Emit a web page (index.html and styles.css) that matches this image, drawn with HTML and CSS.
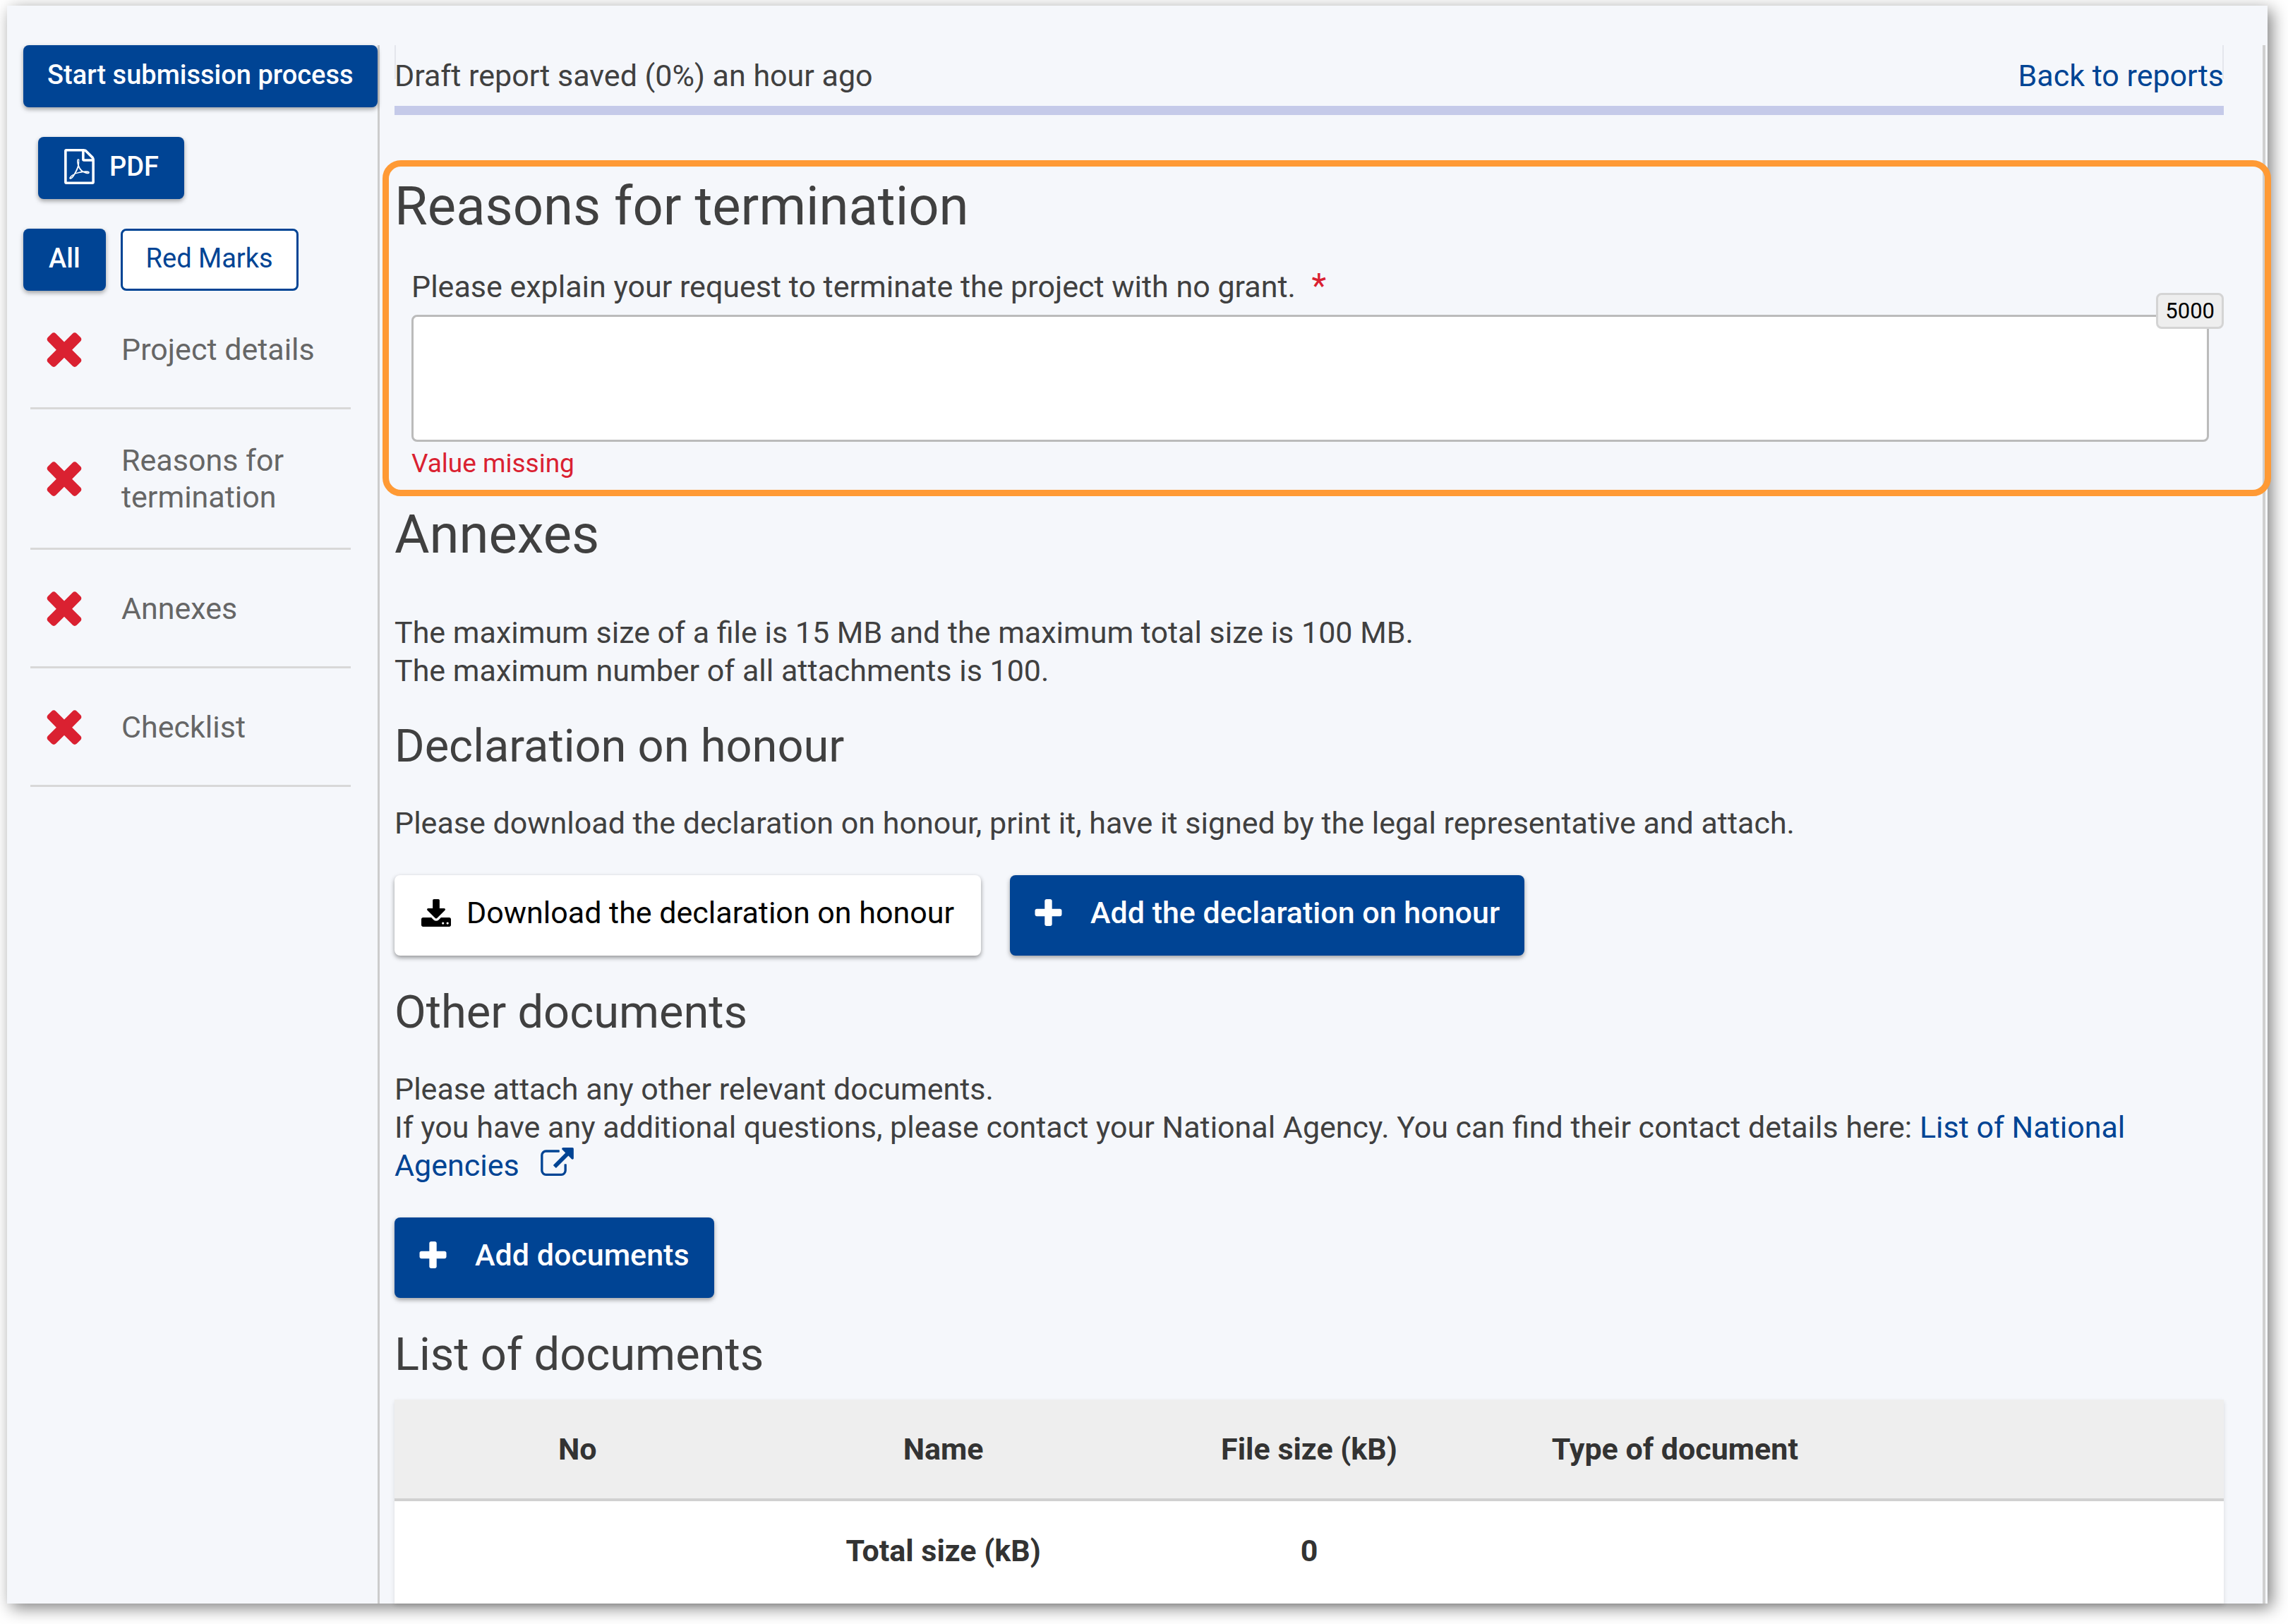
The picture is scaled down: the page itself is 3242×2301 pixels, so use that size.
FILE: index.html
```html
<!DOCTYPE html>
<html lang="en">
<head>
  <meta charset="UTF-8" />
  <title>Final report – Reasons for termination</title>
  <meta name="viewport" content="width=device-width, initial-scale=1" />
  <link rel="stylesheet" href="styles.css">
</head>
<body>
  <!-- Icon shapes used more than once -->
  <svg class="sprite" aria-hidden="true">
    <symbol id="icon-times" viewBox="302 334 1188 1220"><path d="M1490 1322q0 40-28 68l-136 136q-28 28-68 28t-68-28l-294-294-294 294q-28 28-68 28t-68-28l-136-136q-28-28-28-68t28-68l294-294-294-294q-28-28-28-68t28-68l136-136q28-28 68-28t68 28l294 294 294-294q28-28 68-28t68 28l136 136q28 28 28 68t-28 68l-294 294 294 294q28 28 28 68z"/></symbol>
    <symbol id="icon-plus" viewBox="192 128 1408 1408"><path d="M1600 736v192q0 40-28 68t-68 28h-416v416q0 40-28 68t-68 28h-192q-40 0-68-28t-28-68v-416h-416q-40 0-68-28t-28-68v-192q0-40 28-68t68-28h416v-416q0-40 28-68t68-28h192q40 0 68 28t28 68v416h416q40 0 68 28t28 68z"/></symbol>
  </svg>

  <div class="page">
    <aside class="sidebar">
      <button type="button" class="btn btn-primary btn-submit">Start submission process</button>
      <button type="button" class="btn btn-primary btn-pdf">
        <svg class="icon-pdf" viewBox="128 0 1536 1792" aria-hidden="true"><path d="M1596 380q28 28 48 76t20 88v1152q0 40-28 68t-68 28h-1344q-40 0-68-28t-28-68v-1600q0-40 28-68t68-28h896q40 0 88 20t76 48zm-444-244v376h376q-10-29-22-41l-313-313q-12-12-41-22zm384 1528v-1024h-416q-40 0-68-28t-28-68v-416h-768v1536h1280zm-514-593q33 26 84 56 59-7 117-7 147 0 177 49 16 22 2 52 0 1-1 2l-2 2v1q-6 38-71 38-48 0-115-20t-130-53q-221 24-392 83-153 262-242 262-15 0-28-7l-24-12q-1-1-6-5-10-10-6-36 9-40 56-91.5t132-96.5q14-9 23 6 2 2 2 4 52-85 107-197 68-136 104-262-24-82-30.5-159.5t6.5-127.5q11-40 42-40h22q23 0 35 15 18 21 9 68-2 6-4 8 1 3 1 8v30q-2 123-14 192 55 164 146 238zm-576 411q52-24 137-158-51 40-87.5 84t-49.5 74zm398-920q-15 42-2 132 1-7 7-44 0-3 7-43 1-4 4-8-1-1-1-2-1-2-1-3-1-22-13-36 0 1-1 2v2zm-124 661q135-54 284-81-2-1-13-9.5t-16-13.5q-76-67-127-176-27 86-83 197-30 56-45 83zm646-16q-24-24-140-24 76 28 124 28 14 0 18-1 0-1-2-3z"/></svg>
        PDF
      </button>
      <div class="filters">
        <button type="button" class="btn btn-primary">All</button>
        <button type="button" class="btn btn-outline">Red Marks</button>
      </div>
      <nav class="steps">
        <a href="#details"><svg class="icon-times" aria-hidden="true"><use href="#icon-times"/></svg>Project details</a>
        <a href="#reasons"><svg class="icon-times" aria-hidden="true"><use href="#icon-times"/></svg>Reasons for termination</a>
        <a href="#annexes"><svg class="icon-times" aria-hidden="true"><use href="#icon-times"/></svg>Annexes</a>
        <a href="#checklist"><svg class="icon-times" aria-hidden="true"><use href="#icon-times"/></svg>Checklist</a>
      </nav>
    </aside>

    <main class="content">
      <header class="status">
        <span>Draft report saved (0%) an hour ago</span>
        <a href="#reports">Back to reports</a>
      </header>

      <section id="reasons" class="highlight">
        <h1>Reasons for termination</h1>
        <div class="field">
          <label for="explanation">Please explain your request to terminate the project with no grant. <span class="required">*</span></label>
          <div class="field-box">
            <textarea id="explanation"></textarea>
            <span class="counter">5000</span>
          </div>
          <p class="error">Value missing</p>
        </div>
      </section>

      <section id="annexes">
        <h1>Annexes</h1>
        <p class="limits">The maximum size of a file is 15 MB and the maximum total size is 100 MB.<br>The maximum number of all attachments is 100.</p>

        <h2>Declaration on honour</h2>
        <p>Please download the declaration on honour, print it, have it signed by the legal representative and attach.</p>
        <div class="actions">
          <button type="button" class="btn btn-large btn-light">
            <svg class="icon-download" viewBox="64 0 1664 1536" aria-hidden="true"><path d="M1344 1344q0-26-19-45t-45-19-45 19-19 45 19 45 45 19 45-19 19-45zm256 0q0-26-19-45t-45-19-45 19-19 45 19 45 45 19 45-19 19-45zm128-224v320q0 40-28 68t-68 28h-1472q-40 0-68-28t-28-68v-320q0-40 28-68t68-28h465l135 136q58 56 136 56t136-56l136-136h464q40 0 68 28t28 68zm-325-569q17 41-14 70l-448 448q-18 19-45 19t-45-19l-448-448q-31-29-14-70 17-39 59-39h256v-448q0-26 19-45t45-19h256q26 0 45 19t19 45v448h256q42 0 59 39z"/></svg>
            Download the declaration on honour
          </button>
          <button type="button" class="btn btn-large btn-primary"><svg class="icon-plus" aria-hidden="true"><use href="#icon-plus"/></svg>Add the declaration on honour</button>
        </div>

        <h2>Other documents</h2>
        <p>Please attach any other relevant documents.<br>If you have any additional questions, please contact your National Agency. You can find their contact details here: <a href="#agencies">List of National Agencies <svg class="icon-external" viewBox="64 0 1792 1536" aria-hidden="true"><path d="M1472 928v320q0 119-84.500 203.500t-203.500 84.500h-832q-119 0-203.500-84.500t-84.500-203.500v-832q0-119 84.500-203.500t203.500-84.500h704q14 0 23 9t9 23v64q0 14-9 23t-23 9h-704q-66 0-113 47t-47 113v832q0 66 47 113t113 47h832q66 0 113-47t47-113v-320q0-14 9-23t23-9h64q14 0 23 9t9 23zm384-864v512q0 26-19 45t-45 19-45-19l-176-176-652 652q-10 10-23 10t-23-10l-114-114q-10-10-10-23t10-23l652-652-176-176q-19-19-19-45t19-45 45-19h512q26 0 45 19t19 45z"/></svg></a></p>
        <div class="actions">
          <button type="button" class="btn btn-large btn-primary"><svg class="icon-plus" aria-hidden="true"><use href="#icon-plus"/></svg>Add documents</button>
        </div>

        <h2>List of documents</h2>
        <table class="documents">
          <thead>
            <tr><th>No</th><th>Name</th><th>File size (kB)</th><th>Type of document</th><th></th></tr>
          </thead>
          <tbody>
            <tr><td></td><td>Total size (kB)</td><td>0</td><td></td><td></td></tr>
          </tbody>
        </table>
      </section>
    </main>
  </div>
</body>
</html>
```
FILE: styles.css
```css
*{box-sizing:border-box}
body{margin:0;padding:8px 29px 29px 10px;font-family:Roboto,"Liberation Sans",sans-serif;font-size:43px;line-height:54px;background:#fff;color:#404040}
h1,h2,p{margin:0}
h1{font-size:76px;line-height:92px;font-weight:400}
h2{font-size:65px;line-height:80px;font-weight:400}
a{color:#004494;text-decoration:none}
svg{fill:currentColor;flex:none}
.sprite{display:none}

.page{display:flex;padding:56px 3px 0 23px;background:#f5f7fb;box-shadow:6px 6px 22px rgba(0,0,0,0.5)}

/* Sidebar */
.sidebar{flex:none;width:505px;display:flex;flex-direction:column;align-items:flex-start;border-right:3px solid #ccc}
.btn{display:inline-flex;align-items:center;height:88px;padding:0 36px 4px;border:0;border-radius:8px;font:500 38px/46px Roboto,"Liberation Sans",sans-serif;white-space:nowrap}
.btn-primary{background:#004494;color:#fff;box-shadow:0 3px 6px rgba(0,0,0,0.35)}
.btn-outline{background:#fff;color:#004494;border:3px solid #004494;padding:0 33px 4px;font-weight:400}
.btn-light{background:#fff;color:#000;box-shadow:0 3px 6px rgba(0,0,0,0.4);font-weight:400}
.btn-submit{padding:0 34px 4px}
.btn-pdf{gap:20px;margin:42px 0 42px 21px}
.icon-pdf{width:45px;height:50px}
.filters{display:flex;gap:21px}

.steps{width:454px;margin-left:10px}
.steps a{display:flex;align-items:center;gap:55px;min-height:168px;padding:46px 0 46px 22px;border-bottom:3px solid #d8d8d8;line-height:52px;color:#666}
.icon-times{width:52px;height:50px;color:#da2131}

/* Report */
.content{flex:1;min-width:0;padding:0 55px 0 21px;border-right:4px solid #d0d0d0}
.status{display:flex;justify-content:space-between;height:99px;padding-top:16px;border-bottom:13px solid #c5cae9;background:linear-gradient(#e4e6ec,#e4e6ec) left top/2px 48px no-repeat,linear-gradient(#e4e6ec,#e4e6ec) right top/2px 48px no-repeat}

.highlight{position:relative;margin:64px -67px 0 -17px;padding:10px 58px 14px 8px;border:9px solid #ff9a35;border-radius:26px}
.field{padding:41px 21px 0 24px}
.field label{display:block}
.required{margin-left:12px;font-size:48px;line-height:1;color:#da2131}
.field-box{position:relative;display:flex;margin-top:13px}
textarea{width:100%;height:180px;padding:16px;border:3px solid #bbb;border-radius:8px;background:#fff;font:inherit;resize:none}
.counter{position:absolute;top:-31px;right:-21px;padding:0 10px;border:3px solid #d4d4d4;border-radius:8px;background:#eee;font-size:31px;line-height:45px;color:#000}
.error{font-size:37px;line-height:46px;margin-top:8px;color:#da2131}

#annexes h1{margin:8px 0 66px}
#annexes h2{margin-bottom:24px}
#annexes h2 + p{margin-top:42px}
#annexes .limits{margin-bottom:40px}
#annexes .actions{display:flex;gap:41px;margin:47px 0 40px}
.btn-large{height:114px;padding:0 35px 8px;font-size:43px}
.btn-large.btn-light{padding:0 38px 8px}
.btn-large .icon-plus{width:39px;height:38px;margin-right:40px}
.icon-download{width:42px;height:39px;margin-right:22px}
.icon-external{width:47px;height:40px;margin-left:20px}

.documents{width:100%;table-layout:fixed;border-collapse:collapse;background:#fff;color:#333;box-shadow:0 3px 6px rgba(0,0,0,0.12)}
.documents th,.documents td{padding:43px 16px;text-align:center;font-weight:700}
.documents td{padding-bottom:48px}
.documents thead{background:#eee;border-bottom:4px solid #d0d0d0}
```
